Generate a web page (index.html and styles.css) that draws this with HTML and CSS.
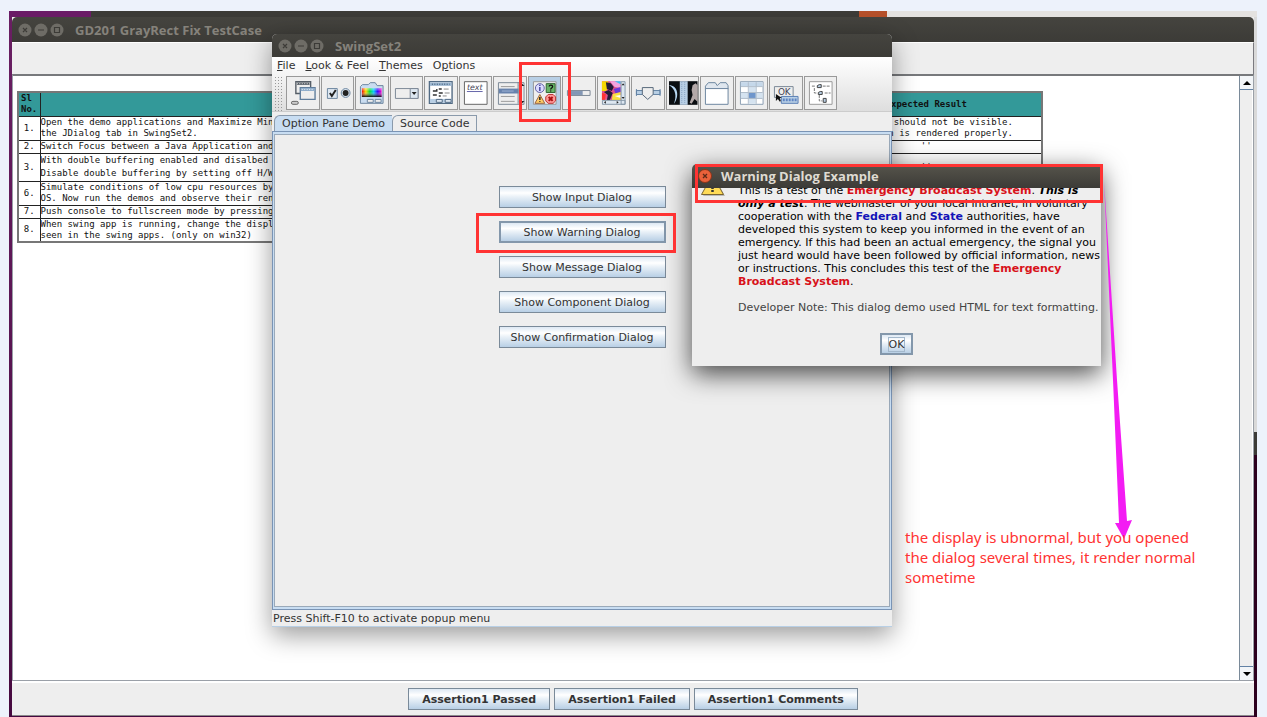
FILE: index.html
```html
<!DOCTYPE html>
<html>
<head>
<meta charset="UTF-8">
<title>GD201 GrayRect Fix TestCase</title>
<link rel="stylesheet" href="styles.css">
</head>
<body>
<div id="desktop">
  <div class="strip"><i class="s1"></i><i class="s2"></i><i class="s3"></i></div>

  <div id="testcase">
    <div class="titlebar">
      <svg width="48" height="14" viewBox="0 0 48 14"><g fill="#6e6c66"><circle cx="7" cy="7" r="6.500"/><circle cx="23" cy="7" r="6.500"/><circle cx="39" cy="7" r="6.500"/></g><g fill="none" stroke="#3c3b37" stroke-width="1.200"><path d="M5 5l4 4M9 5l-4 4M20 7h6"/><path d="M36.500 4.500h5v5h-5z"/></g></svg>
      <b>GD201 GrayRect Fix TestCase</b>
    </div>
    <div class="toppanel"></div>
    <div class="scrollpane">
      <div class="view">
        <table>
          <colgroup><col class="c1"><col><col class="c3"></colgroup>
          <tr class="head"><th>Sl No.</th><th></th><th>Expected Result</th></tr>
          <tr class="two"><td>1.</td><td>Open the demo applications and Maximize Minimize<br>the JDialog tab in SwingSet2.</td><td>Gray Rect should not be visible.<br>The screen is rendered properly.</td></tr>
          <tr class="one"><td>2.</td><td>Switch Focus between a Java Application and another</td><td>''</td></tr>
          <tr class="wide"><td>3.</td><td>With double buffering enabled and disalbed check<br>Disable double buffering by setting off H/W acceleration</td><td>''</td></tr>
          <tr class="two"><td>6.</td><td>Simulate conditions of low cpu resources by running<br>OS. Now run the demos and observe their rendering</td><td></td></tr>
          <tr class="one"><td>7.</td><td>Push console to fullscreen mode by pressing Alt</td><td></td></tr>
          <tr class="two"><td>8.</td><td>When swing app is running, change the display mode<br>seen in the swing apps. (only on win32)</td><td></td></tr>
        </table>
      </div>
      <div class="scrollbar">
        <button aria-label="Scroll up"><svg width="8" height="4"><path d="M0 4L4 0l4 4z"/></svg></button>
        <span></span>
        <button aria-label="Scroll down"><svg width="8" height="4"><path d="M0 0h8L4 4z"/></svg></button>
      </div>
    </div>
    <div class="asserts">
      <button class="metal">Assertion1 Passed</button>
      <button class="metal">Assertion1 Failed</button>
      <button class="metal">Assertion1 Comments</button>
    </div>
  </div>

  <div id="swingset">
    <div class="titlebar">
      <svg width="48" height="14" viewBox="0 0 48 14"><g fill="#6e6c66"><circle cx="7" cy="7" r="6.500"/><circle cx="23" cy="7" r="6.500"/><circle cx="39" cy="7" r="6.500"/></g><g fill="none" stroke="#3c3b37" stroke-width="1.200"><path d="M5 5l4 4M9 5l-4 4M20 7h6"/><path d="M36.500 4.500h5v5h-5z"/></g></svg>
      <b>SwingSet2</b>
    </div>
    <div class="bars">
      <div class="menu">
        <a href="#"><u>F</u>ile</a><a href="#"><u>L</u>ook &amp; Feel</a><a href="#"><u>T</u>hemes</a><a href="#">O<u>p</u>tions</a>
      </div>
      <div class="toolbar">
        <div class="grip"></div>
        <div class="tools">
          <button aria-label="Internal frames"><svg viewBox="0 0 32 32"><path d="M9 4.500h15v12H9z" fill="#eee" stroke="#555d66" stroke-width="1.400"/><path d="M10 6.500h13" stroke="#555d66" stroke-width="2.500"/><path d="M10 6.500h13" stroke="#ddd" stroke-dasharray="1 1.500"/><path d="M13.500 10.500h15v12h-15z" fill="#eee" stroke="#5f7d9c" stroke-width="1.400"/><path d="M14 12.500h14" stroke="#8fadcb" stroke-width="3"/><path d="M15 12.500h12" stroke="#e4edf6" stroke-dasharray="1 1.500"/><rect x="4.500" y="24.500" width="7" height="3" rx="1.500" fill="#ccc" stroke="#666"/></svg></button>
          <button aria-label="Buttons"><svg viewBox="0 0 32 32"><path d="M5.500 11.500h10v10h-10z" fill="#dde7f1" stroke="#6d86a0"/><path d="M8 16l2 3 4-6" fill="none" stroke="#222" stroke-width="2"/><circle cx="24" cy="16" r="4.500" fill="#dde7f1" stroke="#6d86a0"/><circle cx="24" cy="16" r="3" fill="#222"/></svg></button>
          <button aria-label="Color chooser"><svg viewBox="0 0 32 32"><defs><linearGradient id="hue"><stop offset="0" stop-color="#e00"/><stop offset=".2" stop-color="#fd0"/><stop offset=".4" stop-color="#0d3"/><stop offset=".6" stop-color="#0cf"/><stop offset=".8" stop-color="#30f"/><stop offset="1" stop-color="#f0c"/></linearGradient><linearGradient id="dk" x2="0" y2="1"><stop offset="0" stop-color="#fff" stop-opacity=".5"/><stop offset=".4" stop-color="#fff" stop-opacity="0"/><stop offset="1" stop-color="#000"/></linearGradient></defs><path d="M4.500 26.500v-17l2-2h6l2-2h5l2 3h6v18z" fill="#c9dcf0" stroke="#6d86a0"/><path d="M6 11h20v9H6z" fill="url(#hue)"/><path d="M6 11h20v9H6z" fill="url(#dk)"/><path d="M11.500 22.500h6v3h-6zM19.500 22.500h6v3h-6z" fill="#eee" stroke="#6d86a0"/></svg></button>
          <button aria-label="Combo box"><svg viewBox="0 0 32 32"><path d="M4.500 11.500h23v10h-23z" fill="#eee" stroke="#7c8896"/><path d="M19.500 11.500h8v10h-8z" fill="#dde7f1" stroke="#7c8896"/><path d="M21 15h5l-2.500 3z" fill="#222"/></svg></button>
          <button aria-label="File chooser"><svg viewBox="0 0 32 32"><path d="M4.500 4.500h23v22h-23z" fill="#fff" stroke="#526b84" stroke-width="1.400"/><path d="M5 7h22" stroke="#9db8d2" stroke-width="3.500"/><path d="M7 7h18" stroke="#526b84" stroke-width="1.500" stroke-dasharray="1 1.500"/><path d="M5 24h22" stroke="#b8cfe5" stroke-width="4"/><path d="M8 14h4v-2M8 18h4" fill="none" stroke="#333" stroke-width="1.400"/><path d="M14 12h3M14 16h4M14 19h2" stroke="#333" stroke-width="1.400"/><path d="M19 12h5M20 16h5M18 19h4" stroke="#888"/><path d="M11.500 22.500h6v3h-6zM20.500 22.500h6v3h-6z" fill="#dde7f1" stroke="#526b84"/></svg></button>
          <button aria-label="HTML"><svg viewBox="0 0 32 32"><path d="M4.500 4.500h23v23h-23z" fill="#fff" stroke="#666"/><text x="7" y="13" font-size="8">text</text><path d="M7 14.500h16" stroke="#66a"/></svg></button>
          <button aria-label="List"><svg viewBox="0 0 32 32"><path d="M4.500 5.500h26v22h-26z" fill="#eee" stroke="#7c8896"/><path d="M7 9.500h14M7 19.500h14M7 24.500h14" stroke="#999"/><path d="M5 14h20" stroke="#6883ad" stroke-width="5"/><path d="M8 14h12" stroke="#9fb4d6"/><path d="M24.500 5v22" stroke="#7c8896"/><path d="M25 9l3-3 3 3zM25 24l3 3 3-3z" fill="#222"/></svg></button>
          <button class="on" aria-label="Option pane"><svg viewBox="0 0 32 32"><path d="M4.500 4.500h23v23h-23z" fill="#eee" stroke="#999"/><circle cx="11" cy="11" r="4.500" fill="#dcdcff" stroke="#6464a5"/><path d="M11 10v4M11 7.500v1.500" stroke="#4444a0" stroke-width="1.500"/><path d="M17.500 6.500h9v9h-9z" fill="#66b366" stroke="#336633"/><path d="M20.500 9.500c0-2 3.500-2 3.500 0 0 1.500-2 1.500-2 3M22 13.500v1" fill="none" stroke="#111" stroke-width="1.300"/><path d="M11 17.500l5 9H6z" fill="#fc6" stroke="#964"/><path d="M11 20v3M11 24v1" stroke="#222" stroke-width="1.500"/><path d="M19.500 17.500h5l2.500 2.500v4l-2.500 2.500h-5L17 24v-4z" fill="#f99" stroke="#b33"/><path d="M20 20l4 4M24 20l-4 4" stroke="#a11" stroke-width="2"/></svg></button>
          <button aria-label="Progress bar"><svg viewBox="0 0 32 32"><path d="M4.500 13.500h23v5h-23z" fill="#eee" stroke="#7c8896"/><path d="M5 14h15v4H5z" fill="#8296b4"/></svg></button>
          <button aria-label="Scroll pane"><svg viewBox="0 0 32 32"><path d="M4 4h19v19H4z" fill="#e0508a"/><path d="M4 4h6l2 5-4 5H4z" fill="#f5d800"/><path d="M12 4h11v7l-6-1z" fill="#f4a3e0"/><path d="M17 4h6v3z" fill="#3ac0f0"/><path d="M8 5l5 1 3 4-2 4-5-2zM11 13l4 3-3 7H9l1-5-4-3z" fill="#231b3a"/><path d="M16 12l7-2v5l-5 2z" fill="#6a3ad8"/><path d="M15 17l8-2v8h-9z" fill="#f8e040"/><path d="M17 19l6-1v3z" fill="#fff"/><path d="M4 16l4 1-1 6H4z" fill="#f33"/><path d="M23.500 4.500h4v23h-4zM4.500 23.500h23v4h-23z" fill="#dde7f1" stroke="#89a"/><path d="M24 8l1.500-2L27 8zM24 20l1.500 2 1.500-2zM8 24v3l-2-1.500zM19 24v3l2-1.500z" fill="#222"/></svg></button>
          <button aria-label="Slider"><svg viewBox="0 0 32 32"><path d="M4.500 13.500h24v4h-24z" fill="#b8cfe5" stroke="#6382a5"/><path d="M4.500 12v7M28.500 12v7" stroke="#6382a5"/><path d="M10.500 10.500h11v7l-5.500 5-5.500-5z" fill="#eee" stroke="#56687a"/></svg></button>
          <button aria-label="Split pane"><svg viewBox="0 0 32 32"><path d="M2 4h29v24H2z" fill="#0a0e12"/><path d="M2 8c9 0 11 11 5 19 3-8 2-15-5-19z" fill="#b7d7f2"/><path d="M13 4h8v24h-8z" fill="#b8cfe5"/><path d="M15 5v22M18 5v22" stroke="#86a2c0" stroke-dasharray="1 1"/><path d="M26 8l3-2 2 2v17l-3-3-3 5-2-1 3-8-1-5z" fill="#b3a8a8"/></svg></button>
          <button aria-label="Tabbed pane"><svg viewBox="0 0 32 32"><path d="M4.500 12v-3l3-3.500h7l2 3 3-3h6l2 3V12z" fill="#dfe6ee" stroke="#6d86a0"/><path d="M4.500 11.500h23v16h-23z" fill="#fff" stroke="#6d86a0"/></svg></button>
          <button aria-label="Table"><svg viewBox="0 0 32 32"><path d="M4.500 4.500h23v23h-23z" fill="#fff" stroke="#8ca0b4"/><path d="M5 5h22v4H5z" fill="#c5d8ea"/><path d="M13 10h7v17h-7zM5 16h22v6H5z" fill="#d5e3f0"/><path d="M13 16h7v6h-7z" fill="#6e96cc"/><path d="M5 9.500h22M5 15.500h22M5 21.500h22M12.500 5v22M20.500 5v22" stroke="#b0bdca"/></svg></button>
          <button aria-label="Tool tips"><svg viewBox="0 0 32 32"><path d="M4.500 9.500h19v11h-19z" fill="#eee" stroke="#7c8896"/><text class="ok" x="8" y="18" font-size="9">OK</text><path d="M11.500 19.500h17v7h-17z" fill="#b8cfe5" stroke="#5a7fb5"/><path d="M13 23h14" stroke="#5f85c4" stroke-width="3" stroke-dasharray="2 1"/><path d="M6 17v7l2-2 2 3 1-1-1-3h2z" fill="#111"/></svg></button>
          <button aria-label="Tree"><svg viewBox="0 0 32 32"><path d="M4.500 4.500h23v23h-23z" fill="#fff" stroke="#999"/><path d="M7 9h4M18 9h7M9.500 11v5h3M20 16h6M14.500 18v6h3" fill="none" stroke="#777" stroke-dasharray="3 1"/><path d="M12.500 10.500v-2l2-1h2v3zM13.500 17.500v-2l2-1h2v3zM18.500 21.500h3v4h-3z" fill="#b8cfe5" stroke="#444"/></svg></button>
        </div>
      </div>
    </div>
    <div class="tabs">
      <button class="tab sel">Option Pane Demo</button><button class="tab">Source Code</button>
    </div>
    <div class="pane">
      <div class="demo">
        <button class="metal">Show Input Dialog</button>
        <button class="metal focus">Show Warning Dialog</button>
        <button class="metal">Show Message Dialog</button>
        <button class="metal">Show Component Dialog</button>
        <button class="metal">Show Confirmation Dialog</button>
      </div>
    </div>
    <div class="status">Press Shift-F10 to activate popup menu</div>
  </div>

  <div id="warning">
    <div class="titlebar">
      <svg width="14" height="14" viewBox="0 0 14 14"><circle cx="7" cy="7" r="6.500" fill="#e9613a" stroke="#8a3419"/><path d="M5 5l4 4M9 5l-4 4" stroke="#5b2a18" stroke-width="1.300"/></svg>
      <b>Warning Dialog Example</b>
    </div>
    <div class="message">
      <svg class="alert" width="26" height="24" viewBox="0 0 26 24"><path d="M14 2l11 20H3z" fill="#999" opacity=".6"/><path d="M12.500 1L23.500 20.500H1.500z" fill="#ffdb57" stroke="#7a6530"/><path d="M12.500 7v8M12.500 16v2" stroke="#333" stroke-width="2.500"/></svg>
      <div class="text">
        <p>This is a test of the <b class="r">Emergency Broadcast System</b>. <b><em>This is<br>only a test</em></b>. The webmaster of your local intranet, in voluntary<br>cooperation with the <b class="bl">Federal</b> and <b class="bl">State</b> authorities, have<br>developed this system to keep you informed in the event of an<br>emergency. If this had been an actual emergency, the signal you<br>just heard would have been followed by official information, news<br>or instructions. This concludes this test of the <b class="r">Emergency<br>Broadcast System</b>.</p>
        <p class="note">Developer Note: This dialog demo used HTML for text formatting.</p>
      </div>
    </div>
    <button class="metal focus"><span>OK</span></button>
  </div>

  <div class="mark m1"></div>
  <div class="mark m2"></div>
  <div class="mark m3"></div>
  <svg id="arrow" width="32" height="364" viewBox="0 0 32 364"><path d="M2 2L15 201l10 141 5-1-8 19-9-16h4L11 201z" fill="#f31cf3"/></svg>
  <p id="comment">the display is ubnormal, but you opened<br>the dialog several times, it render normal<br>sometime</p>
</div>
</body>
</html>
```
FILE: styles.css
```css
*{
  box-sizing: border-box;
}
body{
  margin: 0;
  padding: 11px 10px 0 9px;
  height: 100vh;
  display: flex;
  overflow: hidden;
  background-color: #edf2fb;
  font-family: "DejaVu Sans", sans-serif;
  font-size: 11px;
  color: #333;
}
button{
  font: inherit;
  color: inherit;
  padding: 0;
}
p{
  margin: 0;
}
#desktop{
  position: relative;
  flex: 1;
  display: flex;
  flex-direction: column;
  padding: 0 3px 1px;
  background: linear-gradient(#d9d9d9 421px, #3c3b37 421px, #3c3b37 444px, #2c001e 444px) right / 3px 100% no-repeat,
    linear-gradient(#6a1f63, #46093f);
}
.strip{
  display: flex;
  height: 6px;
  margin: 0 -3px;
  background-color: #e4e2e0;
}
.s1{
  width: 82px;
  background-color: #6a1b66;
}
.s2{
  width: 768px;
  background-color: #3c3b37;
}
.s3{
  width: 28px;
  background-color: #b5502a;
}

/* windows */
.titlebar{
  display: flex;
  align-items: center;
  gap: 9px;
  height: 24px;
  padding-left: 6px;
  border-radius: 5px 5px 0 0;
  background: linear-gradient(#45443f, #3c3b37);
  color: #85827b;
  font-family: "Open Sans", sans-serif;
  font-size: 13px;
}
#testcase{
  flex: 1;
  display: flex;
  flex-direction: column;
  background-color: #eee;
  border-bottom: 1px solid #8a8a8a;
}
#testcase .titlebar{
  height: 25px;
}
.toppanel{
  height: 32px;
  border-top: 1px solid #fff;
  border-right: 1px solid #7a7a80;
}
.scrollpane{
  flex: 1;
  display: flex;
  border: 1px solid #9aa0a8;
  border-top: 2px solid #77797c;
  background-color: #fff;
}
.view{
  flex: 1;
  padding: 15px 0 0 4px;
}
.scrollbar{
  width: 14px;
  display: flex;
  flex-direction: column;
  border-left: 1px solid #7a8a99;
  background-color: #eee;
}
.scrollbar span{
  flex: 1;
  border-right: 1px solid #fff;
}
.scrollbar button{
  height: 14px;
  display: flex;
  align-items: center;
  justify-content: center;
  border: 0;
  border-bottom: 1px solid #6382a5;
  background-color: #f2f5f8;
}
.scrollbar button:last-child{
  border-top: 1px solid #6382a5;
  border-bottom: 0;
}
.asserts{
  height: 34px;
  display: flex;
  justify-content: center;
  align-items: center;
  gap: 4px;
  border-top: 2px solid #fff;
  font-weight: bold;
}
.asserts .metal{
  padding: 0 13px;
}
table{
  width: 1026px;
  table-layout: fixed;
  border-collapse: collapse;
  border: 2px solid #777;
  font-family: "DejaVu Sans Mono", monospace;
  font-size: 9px;
  line-height: 11px;
  color: #111;
}
.c1{
  width: 22px;
}
.c3{
  width: 231px;
}
td, th{
  padding: 0;
  border: 1px solid #222;
  white-space: nowrap;
  overflow: hidden;
}
th{
  background-color: #339999;
}
th:first-child{
  white-space: normal;
  text-align: left;
  padding-left: 2px;
}
td:first-child, td:last-child{
  text-align: center;
}
.head, .two{
  height: 24px;
}
.one{
  height: 13px;
}
.wide{
  height: 28px;
  line-height: 13px;
}

.metal{
  height: 22px;
  border: 1px solid #7a8a99;
  background: linear-gradient(#dde8f3, #fff 30%, #e8f0f7 50%, #b8cfe5);
}
.focus{
  border: 2px solid #8397ab;
}

#swingset{
  position: absolute;
  left: 263px;
  top: 23px;
  width: 620px;
  height: 593px;
  display: flex;
  flex-direction: column;
  background-color: #eee;
  border-radius: 5px 5px 0 0;
  box-shadow: 0 8px 26px rgba(0, 0, 0, 0.4);
}
#swingset .titlebar{
  height: 23px;
}
.bars{
  height: 55px;
  background: linear-gradient(#fff, #dedede);
  border-bottom: 1px solid #ccc;
}
.menu{
  display: flex;
  gap: 10px;
  height: 19px;
  padding-left: 5px;
  line-height: 17px;
}
.menu a{
  color: #333;
  text-decoration: none;
}
.toolbar{
  display: flex;
  gap: 4px;
  padding-left: 2px;
}
.grip{
  width: 8px;
  height: 35px;
  background: radial-gradient(#999 30%, transparent 40%) 0 0 / 3px 3px;
}
.tools{
  width: 551px;
  display: grid;
  grid-template-columns: repeat(16, 1fr);
  gap: 1px;
}
.tools button{
  height: 34px;
  border: 1px solid #999;
  background-color: #eee;
}
.tools .on{
  background-color: #b8cfe5;
}
.tools svg{
  display: block;
  width: 100%;
  height: 32px;
}
.tools text{
  font-style: italic;
  fill: #445;
}
.tools .ok{
  font-style: normal;
}
.tabs{
  display: flex;
  height: 19px;
  padding: 3px 2px 0;
}
.tab{
  border: 1px solid #8a9aab;
  border-bottom: 0;
  border-top-left-radius: 6px;
  padding: 0 7px;
  background-color: #eee;
}
.tab.sel{
  background-color: #c8ddf2;
  border-right: 0;
}
.pane{
  flex: 1;
  border: 1px solid #7a94b5;
  background-color: #c8ddf2;
  padding: 2px 1px;
}
.demo{
  height: 100%;
  display: flex;
  flex-direction: column;
  align-items: center;
  gap: 13px;
  padding-top: 51px;
  border: 1px solid #9aa9b9;
  background-color: #eee;
}
.demo .metal{
  width: 167px;
}
.status{
  height: 17px;
  line-height: 17px;
  padding-left: 1px;
  border-bottom: 1px solid #b8cfe5;
}

#warning{
  position: absolute;
  left: 683px;
  top: 153px;
  width: 409px;
  height: 202px;
  display: flex;
  flex-direction: column;
  align-items: center;
  background-color: #eee;
  border-radius: 5px 5px 0 0;
  box-shadow: 0 8px 26px rgba(0, 0, 0, 0.7);
}
#warning .titlebar{
  width: 100%;
  background: linear-gradient(#57554c, #3c3b37);
  color: #dfdbd2;
}
.message{
  width: 100%;
  height: 145px;
  display: flex;
  align-items: flex-start;
  gap: 12px;
  padding-left: 8px;
  overflow: hidden;
  line-height: 13px;
  color: #000;
}
.alert{
  margin-top: -14px;
}
.text{
  margin-top: -4px;
  white-space: nowrap;
}
.note{
  margin-top: 13px;
  color: #444;
}
.r{
  color: #d8121a;
}
.bl{
  color: #1414b8;
}
#warning .metal{
  width: 33px;
}
#warning .metal span{
  border: 1px solid #a3b8cc;
}

/* review marks drawn over the windows */
.mark{
  position: absolute;
  border: 3px solid #ff3333;
}
.m1{
  left: 510px;
  top: 51px;
  width: 52px;
  height: 60px;
}
.m2{
  left: 467px;
  top: 202px;
  width: 200px;
  height: 40px;
}
.m3{
  left: 686px;
  top: 153px;
  width: 408px;
  height: 39px;
}
#arrow{
  position: absolute;
  left: 1093px;
  top: 168px;
}
#comment{
  position: absolute;
  left: 896px;
  top: 516px;
  font-family: "Noto Sans", sans-serif;
  font-size: 15px;
  line-height: 20px;
  color: #ff3333;
}
```
